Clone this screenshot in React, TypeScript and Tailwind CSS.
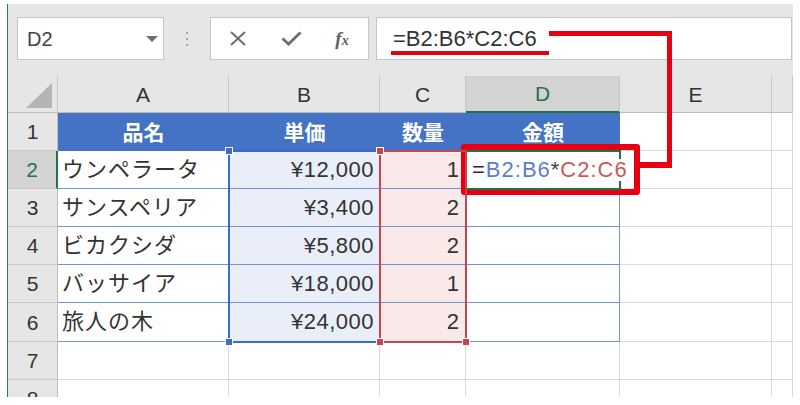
import React from 'react';

type Row = { a: string; b: string; c: string };

const rows: Row[] = [
  { a: 'ウンペラータ', b: '¥12,000', c: '1' },
  { a: 'サンスペリア', b: '¥3,400', c: '2' },
  { a: 'ビカクシダ', b: '¥5,800', c: '2' },
  { a: 'バッサイア', b: '¥18,000', c: '1' },
  { a: '旅人の木', b: '¥24,000', c: '2' },
];

const cols = ['A', 'B', 'C', 'D', 'E', ''];

function RowHeader({ n, active }: { n: number; active?: boolean }) {
  return active ? (
    <div className="flex items-center justify-center bg-[#d3d3d3] border-r-2 border-b border-r-[#217346] border-b-[#c9c9c9] text-[21px] leading-none text-[#217346]">
      {n}
    </div>
  ) : (
    <div className="flex items-center justify-center bg-[#e6e6e6] border-r border-b border-r-[#bdbdbd] border-b-[#cbcbcb] text-[21px] leading-none text-[#333]">
      {n}
    </div>
  );
}

function GrayCell() {
  return <div className="bg-white border-r border-b border-[#dadada]" />;
}

export default function App() {
  return (
    <div className="relative w-[800px] h-[405px] bg-white overflow-hidden pl-[7px] pr-[7px] pt-[4px] font-['Liberation_Sans','Noto_Sans_CJK_JP',sans-serif]">
      <div className="w-[786px] h-[393px] border-l border-[#2f7d4f] overflow-hidden flex flex-col">
        {/* formula bar */}
        <div className="bg-[#e6e6e6] pt-[13px] pb-[16px] shrink-0">
          <div className="flex h-[43px]">
            <div className="ml-[9px] w-[147px] h-full bg-white border border-[#c6c6c6] flex items-center pl-[9px] pr-[5px]">
              <span className="flex-1 text-[20px] leading-none text-[#444]">D2</span>
              <svg width="12" height="6" viewBox="0 0 12 6">
                <polygon points="0,0 12,0 6,6" fill="#6f6f6f" />
              </svg>
            </div>
            <div className="w-[46px] flex flex-col items-center justify-center gap-[4px]">
              <span className="w-[2px] h-[2px] bg-[#a5a5a5]" />
              <span className="w-[2px] h-[2px] bg-[#a5a5a5]" />
              <span className="w-[2px] h-[2px] bg-[#a5a5a5]" />
            </div>
            <div className="w-[159px] bg-white border border-[#c6c6c6] flex items-center">
              <div className="w-[53px] flex justify-center">
                <svg width="18" height="15" viewBox="0 0 18 15">
                  <path d="M2 1 L16 14 M16 1 L2 14" stroke="#6d6d6d" strokeWidth="2" fill="none" />
                </svg>
              </div>
              <div className="w-[54px] flex justify-center">
                <svg width="21" height="15" viewBox="0 0 21 15">
                  <path d="M1.5 7.5 L7.5 13 L19.5 1.5" stroke="#6d6d6d" strokeWidth="2.8" fill="none" />
                </svg>
              </div>
              <div className="w-[48px] flex justify-center">
                <span className="font-['Liberation_Serif',serif] italic font-bold text-[19px] leading-none text-[#5f5f5f]">
                  f<span className="text-[14px]">x</span>
                </span>
              </div>
            </div>
            <div className="ml-[7px] w-[416px] bg-white border border-[#c6c6c6] pl-[16px] flex items-center text-[22px] leading-none text-[#333]">
              =B2:B6*C2:C6
            </div>
          </div>
        </div>

        {/* sheet grid */}
        <div className="relative shrink-0">
          <div className="grid grid-cols-[50px_171px_151px_86px_154px_152px_21px] grid-rows-[37px_38px_38px_38px_38px_38px_39px_38px_38px]">
            {/* header row */}
            <div className="bg-[#e6e6e6] border-r border-b border-r-[#c8c8c8] border-b-[#bcbcbc] flex items-end justify-end pr-[5px] pb-[4px]">
              <svg width="26" height="25" viewBox="0 0 26 25">
                <polygon points="26,0 26,25 0,25" fill="#b4b4b4" />
              </svg>
            </div>
            {cols.map((c, i) =>
              c === 'D' ? (
                <div key={i} className="bg-[#d3d3d3] border-r border-b-2 border-r-[#c8c8c8] border-b-[#217346] flex items-center justify-center text-[21px] leading-none text-[#217346]">
                  {c}
                </div>
              ) : (
                <div key={i} className="bg-[#e6e6e6] border-r border-b border-r-[#c8c8c8] border-b-[#bcbcbc] flex items-center justify-center text-[21px] leading-none text-[#333]">
                  {c}
                </div>
              )
            )}

            {/* row 1: table header */}
            <RowHeader n={1} />
            <div className="bg-[#4472c4] flex items-center justify-center text-white font-bold text-[21px] leading-none">品名</div>
            <div className="bg-[#4472c4] flex items-center justify-center text-white font-bold text-[21px] leading-none">単価</div>
            <div className="bg-[#4472c4] flex items-center justify-center text-white font-bold text-[21px] leading-none">数量</div>
            <div className="bg-[#4472c4] flex items-center justify-center text-white font-bold text-[21px] leading-none">金額</div>
            <GrayCell />
            <GrayCell />

            {/* data rows */}
            {rows.map((r, i) => (
              <React.Fragment key={i}>
                <RowHeader n={i + 2} active={i === 0} />
                <div className="bg-white border-r border-b border-[#7093d3] flex items-center pl-[4px] text-[22px] tracking-[1px] leading-none text-[#333] whitespace-nowrap">
                  {r.a}
                </div>
                <div className="bg-[#e9eef8] border-r border-b border-[#7093d3] flex items-center justify-end pr-[5px] text-[22px] tracking-[0.5px] leading-none text-[#333]">
                  {r.b}
                </div>
                <div className="bg-[#f9e9e9] border-r border-b border-[#7093d3] flex items-center justify-end pr-[6px] text-[22px] leading-none text-[#333]">
                  {r.c}
                </div>
                {i === 0 ? (
                  <div className="bg-white border-r border-b border-[#7093d3] flex items-center pl-[6px] text-[22px] tracking-[1px] leading-none whitespace-nowrap overflow-visible">
                    <span className="relative z-30 bg-white">
                      <span className="text-[#2b2b2b]">=</span>
                      <span className="text-[#5b80c8]">B2:B6</span>
                      <span className="text-[#444]">*</span>
                      <span className="text-[#c85a5a]">C2:C6</span>
                    </span>
                  </div>
                ) : (
                  <div className="bg-white border-r border-b border-[#7093d3]" />
                )}
                <GrayCell />
                <GrayCell />
              </React.Fragment>
            ))}

            {/* rows 7, 8 */}
            {[7, 8].map((n) => (
              <React.Fragment key={n}>
                <RowHeader n={n} />
                <GrayCell />
                <GrayCell />
                <GrayCell />
                <GrayCell />
                <GrayCell />
                <GrayCell />
              </React.Fragment>
            ))}
          </div>

          {/* selection overlays laid on the same grid */}
          <div className="absolute inset-0 z-20 pointer-events-none grid grid-cols-[50px_171px_151px_86px_154px_152px_21px] grid-rows-[37px_38px_38px_38px_38px_38px_39px_38px_38px]">
            <div className="col-start-3 row-start-3 row-span-5 -mx-px -my-px border-2 border-[#3b6cc5] relative">
              <span className="absolute -left-[5px] -top-[5px] w-[8px] h-[8px] bg-[#3b6cc5] border border-white" />
              <span className="absolute -left-[5px] -bottom-[5px] w-[8px] h-[8px] bg-[#3b6cc5] border border-white" />
            </div>
            <div className="col-start-4 row-start-3 row-span-5 -mx-px -my-px border-2 border-[#c4474d] relative">
              <span className="absolute -left-[5px] -top-[5px] w-[8px] h-[8px] bg-[#c4474d] border border-white" />
              <span className="absolute -left-[5px] -bottom-[5px] w-[8px] h-[8px] bg-[#c4474d] border border-white" />
              <span className="absolute -right-[5px] -bottom-[5px] w-[8px] h-[8px] bg-[#c4474d] border border-white" />
            </div>
            <div className="col-start-5 row-start-3 -m-px border-2 border-[#217346]" />
          </div>
        </div>
      </div>

      {/* red annotation */}
      <div className="absolute left-[391px] top-[51px] w-[158px] h-[4px] bg-[#e60012]" />
      <div className="absolute left-[549px] top-[31px] w-[123px] h-[5px] bg-[#e60012]" />
      <div className="absolute left-[667px] top-[31px] w-[5px] h-[137px] bg-[#e60012]" />
      <div className="absolute left-[636px] top-[162px] w-[36px] h-[6px] bg-[#e60012]" />
      <div className="absolute left-[461px] top-[144px] w-[179px] h-[51px] border-[6px] border-[#e60012] rounded-[3px]" />
    </div>
  );
}
